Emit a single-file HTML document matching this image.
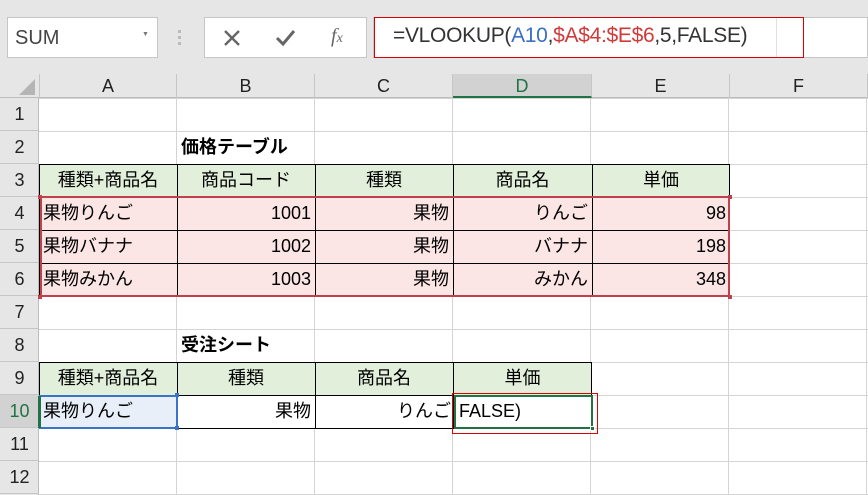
<!DOCTYPE html>
<html><head><meta charset="utf-8"><style>
*{margin:0;padding:0;box-sizing:border-box}
body{width:868px;height:495px;overflow:hidden;background:#e6e6e6;font-family:"Liberation Sans","Noto Sans CJK JP",sans-serif;position:relative}
.a{position:absolute}
.c{position:absolute;font-size:18px;line-height:33px;height:33px;color:#000;white-space:nowrap;overflow:hidden}
.l{padding-left:4px}.r{text-align:right;padding-right:4px}.m{text-align:center}
.ch{position:absolute;top:74px;height:24px;font-size:18px;line-height:24px;text-align:center;color:#222;border-right:1px solid #c6c6c6}
.rh{position:absolute;left:0;width:39px;height:33px;font-size:18px;line-height:33px;text-align:center;color:#222;border-bottom:1px solid #c6c6c6}
</style></head><body>
<div class="a" style="left:7px;top:17px;width:151px;height:41px;background:#fff;border:1px solid #c6c6c6"></div>
<div class="a" style="left:15px;top:27px;font-size:20px;color:#444">SUM</div>
<div class="a" style="left:142px;top:31px;font-size:7px;color:#777">▼</div>
<div class="a" style="left:178px;top:30px;width:3px;height:3px;background:#bbb;box-shadow:0 6px 0 #bbb,0 12px 0 #bbb"></div>
<div class="a" style="left:204px;top:17px;width:163px;height:41px;background:#fff;border:1px solid #c6c6c6"></div>
<svg class="a" style="left:222px;top:29px" width="20" height="18"><path d="M3 2L17 16M17 2L3 16" stroke="#666" stroke-width="2.4"/></svg>
<svg class="a" style="left:274px;top:29px" width="24" height="18"><path d="M3 9L9 15L20 2" stroke="#666" stroke-width="3" fill="none"/></svg>
<div class="a" style="left:331px;top:25px;font-family:'Liberation Serif',serif;font-style:italic;font-size:20px;color:#666">f<span style="font-size:14px">x</span></div>
<div class="a" style="left:373px;top:17px;width:495px;height:41px;background:#fff;border:1px solid #c6c6c6"></div>
<div class="a" style="left:374px;top:17px;width:430px;height:41px;border:1px solid #d00"></div>
<div class="a" style="left:776px;top:18px;width:1px;height:39px;background:#e0e0e0"></div>
<div class="a" style="left:393px;top:24px;font-size:21px;color:#333;white-space:nowrap;letter-spacing:-0.3px">=VLOOKUP(<span style="color:#3b6fc4">A10</span>,<span style="color:#d23a3a">$A$4:$E$6</span>,5,FALSE)</div>
<div class="a" style="left:39px;top:98px;width:829px;height:397px;background:#fff;
background-image:linear-gradient(#d4d4d4 1px,transparent 1px),linear-gradient(90deg,#d4d4d4 1px,transparent 1px);
background-size:138px 33px;background-position:-1px 0,-1px 0"></div>
<div class="a" style="left:0;top:74px;width:868px;height:24px;background:#e6e6e6;border-bottom:1px solid #bdbdbd"></div>
<svg class="a" style="left:18px;top:78px" width="18" height="18"><path d="M17 1L17 17L1 17Z" fill="#b5b5b5"/></svg>
<div class="ch" style="left:39px;width:138px;border-left:1px solid #c6c6c6">A</div>
<div class="ch" style="left:177px;width:138px">B</div>
<div class="ch" style="left:315px;width:138px">C</div>
<div class="ch" style="left:453px;width:139px;background:#d2d2d2;color:#217346;border-bottom:2px solid #217346">D</div>
<div class="ch" style="left:592px;width:138px">E</div>
<div class="ch" style="left:730px;width:138px">F</div>
<div class="a" style="left:0;top:98px;width:39px;height:397px;background:#e6e6e6;border-right:1px solid #bdbdbd"></div>
<div class="rh" style="top:98px">1</div><div class="rh" style="top:131px">2</div><div class="rh" style="top:164px">3</div><div class="rh" style="top:197px">4</div><div class="rh" style="top:230px">5</div><div class="rh" style="top:263px">6</div><div class="rh" style="top:296px">7</div><div class="rh" style="top:329px">8</div><div class="rh" style="top:362px">9</div><div class="rh" style="top:395px;background:#d2d2d2;color:#217346">10</div><div class="rh" style="top:428px">11</div><div class="rh" style="top:461px">12</div>
<div class="c l" style="left:177px;top:131px;font-weight:bold">価格テーブル</div>
<div class="a" style="left:39px;top:164px;width:691px;height:33px;background:#e2efda"></div>
<div class="a" style="left:39px;top:197px;width:691px;height:99px;background:#fbe5e5"></div>
<svg class="a" style="left:39px;top:164px" width="692" height="133"><g stroke="#000" stroke-width="1"><path d="M0.5 0.5H691M0.5 33.5H691M0.5 66.5H691M0.5 99.5H691M0.5 132.5H691"/><path d="M0.5 0V133M138.5 0V133M276.5 0V133M414.5 0V133M553.5 0V133M690.5 0V133"/></g></svg>
<div class="a" style="left:40px;top:196px;width:690px;height:101px;border:2px solid #c0404b"></div>
<div class="a" style="left:38px;top:195px;width:4px;height:4px;background:#c0404b"></div>
<div class="a" style="left:728px;top:195px;width:4px;height:4px;background:#c0404b"></div>
<div class="a" style="left:38px;top:295px;width:4px;height:4px;background:#c0404b"></div>
<div class="a" style="left:728px;top:295px;width:4px;height:4px;background:#c0404b"></div>
<div class="c m" style="left:39px;top:164px;width:138px">種類+商品名</div>
<div class="c m" style="left:177px;top:164px;width:138px">商品コード</div>
<div class="c m" style="left:315px;top:164px;width:138px">種類</div>
<div class="c m" style="left:453px;top:164px;width:139px">商品名</div>
<div class="c m" style="left:592px;top:164px;width:138px">単価</div>
<div class="c l" style="left:39px;top:197px">果物りんご</div><div class="c r" style="left:177px;top:197px;width:138px">1001</div><div class="c r" style="left:315px;top:197px;width:138px">果物</div><div class="c r" style="left:453px;top:197px;width:139px">りんご</div><div class="c r" style="left:592px;top:197px;width:138px">98</div>
<div class="c l" style="left:39px;top:230px">果物バナナ</div><div class="c r" style="left:177px;top:230px;width:138px">1002</div><div class="c r" style="left:315px;top:230px;width:138px">果物</div><div class="c r" style="left:453px;top:230px;width:139px">バナナ</div><div class="c r" style="left:592px;top:230px;width:138px">198</div>
<div class="c l" style="left:39px;top:263px">果物みかん</div><div class="c r" style="left:177px;top:263px;width:138px">1003</div><div class="c r" style="left:315px;top:263px;width:138px">果物</div><div class="c r" style="left:453px;top:263px;width:139px">みかん</div><div class="c r" style="left:592px;top:263px;width:138px">348</div>
<div class="c l" style="left:177px;top:329px;font-weight:bold">受注シート</div>
<div class="a" style="left:39px;top:362px;width:553px;height:33px;background:#e2efda"></div>
<div class="a" style="left:39px;top:395px;width:138px;height:33px;background:#e8eff9"></div>
<div class="a" style="left:177px;top:395px;width:415px;height:33px;background:#fff"></div>
<svg class="a" style="left:39px;top:362px" width="554" height="67"><g stroke="#000" stroke-width="1"><path d="M0 0.5H553M0 33.5H553M0 66.5H553"/><path d="M0.5 0V67M138.5 0V67M276.5 0V67M414.5 0V67M552.5 0V67"/></g></svg>
<div class="a" style="left:39px;top:395px;width:139px;height:34px;border:2px solid #3a74c9"></div>
<div class="a" style="left:175px;top:393px;width:4px;height:4px;background:#3a74c9"></div>
<div class="a" style="left:175px;top:426px;width:4px;height:4px;background:#3a74c9"></div>
<div class="a" style="left:38px;top:396px;width:3px;height:32px;background:#217346"></div>
<div class="a" style="left:452px;top:393px;width:146px;height:41px;border:1px solid #d00"></div>
<div class="a" style="left:454px;top:395px;width:139px;height:34px;border:2px solid #217346"></div>
<div class="a" style="left:590px;top:426px;width:5px;height:5px;background:#217346;border:1px solid #fff"></div>
<div class="c m" style="left:39px;top:362px;width:138px">種類+商品名</div>
<div class="c m" style="left:177px;top:362px;width:138px">種類</div>
<div class="c m" style="left:315px;top:362px;width:138px">商品名</div>
<div class="c m" style="left:453px;top:362px;width:139px">単価</div>
<div class="c l" style="left:39px;top:395px">果物りんご</div>
<div class="c r" style="left:177px;top:395px;width:138px">果物</div>
<div class="c r" style="left:315px;top:395px;width:138px;padding-right:2px">りんご</div>
<div class="c l" style="left:455px;top:395px">FALSE)</div>
</body></html>
